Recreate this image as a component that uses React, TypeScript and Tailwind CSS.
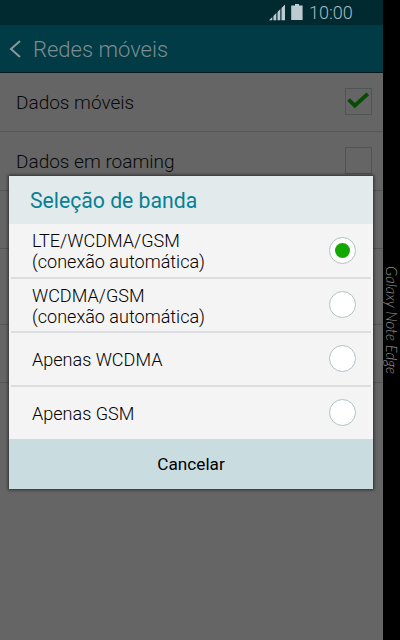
import React, { useState } from "react";
import clsx from "clsx";

const bands = [
  { id: "auto-lte", lines: ["LTE/WCDMA/GSM", "(conexão automática)"] },
  { id: "auto-wcdma", lines: ["WCDMA/GSM", "(conexão automática)"] },
  { id: "wcdma", lines: ["Apenas WCDMA"] },
  { id: "gsm", lines: ["Apenas GSM"] },
];

const SignalIcon = () => (
  <svg width="17" height="17" viewBox="0 0 17 17" fill="#bccbd0">
    <path d="M0 16.3 3.3 13v3.3zM4.4 12 7.3 9v7.3H4.4zM8.5 8 11.3 5v11.3H8.5zM12.5 4 16 .5v15.8h-3.5z" />
  </svg>
);

const BatteryIcon = () => (
  <svg width="12" height="16" viewBox="0 0 12 16" fill="#bccbd0">
    <path d="M4 0h4v1.5h3.6V16H.2V1.5H4z" />
  </svg>
);

const StatusBar = () => (
  <div className="flex h-[25px] items-start bg-[#012a30] pl-[269px] text-[#aab9bd]">
    <div className="mt-1">
      <SignalIcon />
    </div>
    <div className="mt-1 ml-[5px]">
      <BatteryIcon />
    </div>
    <span className="ml-1.5 text-[18px] leading-[25px] font-light">10:00</span>
  </div>
);

const Header = () => (
  <div className="flex h-12 items-center border-b border-[#04181d] bg-[#003b46] pl-[9px] text-[#7d8c90]">
    <svg width="12" height="18" viewBox="0 0 12 18" fill="none" stroke="#8b9799" strokeWidth="2">
      <path d="M11 1 2 9l9 8" />
    </svg>
    <h1 className="ml-3 pt-[3px] text-[22px] leading-none font-light">Redes móveis</h1>
  </div>
);

const CheckBox = ({ checked = false }: { checked?: boolean }) => (
  <span className="mb-0.5 flex h-[27px] w-[27px] items-center justify-center border border-[#4d5656]">
    {checked && (
      <svg width="23" height="18" viewBox="0 0 23 18" fill="none" stroke="#064b02" strokeWidth="3.8">
        <path d="M1.5 7.5 7.7 13.7 20.8 1.8" />
      </svg>
    )}
  </span>
);

const SettingsList = () => (
  <div className="flex-1 bg-[#656565] text-[19px] font-light text-[#080808]">
    <div className="flex h-[59px] items-center justify-between border-b border-[#555] pr-[11px] pl-4">
      <span className="pt-[3px]">Dados móveis</span>
      <CheckBox checked />
    </div>
    <div className="flex h-[59px] items-center justify-between border-b border-[#555] pr-[11px] pl-4">
      <span className="pt-[3px]">Dados em roaming</span>
      <CheckBox />
    </div>
    <div className="h-[58px] border-b border-[#555]" />
    <div className="h-[76px] border-b border-[#555]" />
    <div className="h-[58px] border-b border-[#555]" />
  </div>
);

type BandDialogProps = {
  selected: string;
  onSelect: (id: string) => void;
};

const BandDialog: React.FC<BandDialogProps> = ({ selected, onSelect }) => (
  <div
    role="dialog"
    className="absolute top-[176px] left-[9px] h-[313px] w-[364px] bg-[#f4f4f4] text-black shadow-[0_0_3px_1px_rgba(0,0,0,0.55)]"
  >
    <h2 className="h-12 bg-[#e2eaec] pl-[21px] text-[21.2px] leading-[49px] text-[#078095]">
      Seleção de banda
    </h2>
    <div className="px-0.5">
      {bands.map((band, i) => (
        <button
          key={band.id}
          type="button"
          onClick={() => onSelect(band.id)}
          className={clsx(
            "flex w-full items-center justify-between pr-[15px] pl-[21px] text-left text-[18.05px] leading-[21px] font-light",
            i < bands.length - 1 ? "border-b-2 border-[#dcdfe2]" : "",
            i === 0 ? "h-[55px]" : i === bands.length - 1 ? "h-[52px]" : "h-[54px]"
          )}
        >
          <span className="pt-px">
            {band.lines.map((line) => (
              <span key={line} className="block">
                {line}
              </span>
            ))}
          </span>
          <span className="mb-px flex h-[27px] w-[27px] items-center justify-center rounded-full border border-[#b3c1c5] bg-white">
            {selected === band.id && <span className="h-[15px] w-[15px] rounded-full bg-[#12a800]" />}
          </span>
        </button>
      ))}
    </div>
    <button type="button" className="block h-[50px] w-full bg-[#c9dce0] pt-0.5 text-[17.2px]">
      Cancelar
    </button>
  </div>
);

export default function App() {
  const [selected, setSelected] = useState("auto-lte");

  return (
    <div className="relative flex h-[640px] w-[400px] overflow-hidden bg-black font-['Roboto',sans-serif]">
      <div className="flex w-[383px] flex-col">
        <StatusBar />
        <Header />
        <SettingsList />
      </div>
      <div className="flex w-[17px] items-center justify-center">
        <span className="text-[15px] leading-[17px] font-light whitespace-nowrap text-[#8e8e8e] italic [writing-mode:vertical-rl] font-['Lato',cursive]">
          Galaxy Note Edge
        </span>
      </div>
      <BandDialog selected={selected} onSelect={setSelected} />
    </div>
  );
}
